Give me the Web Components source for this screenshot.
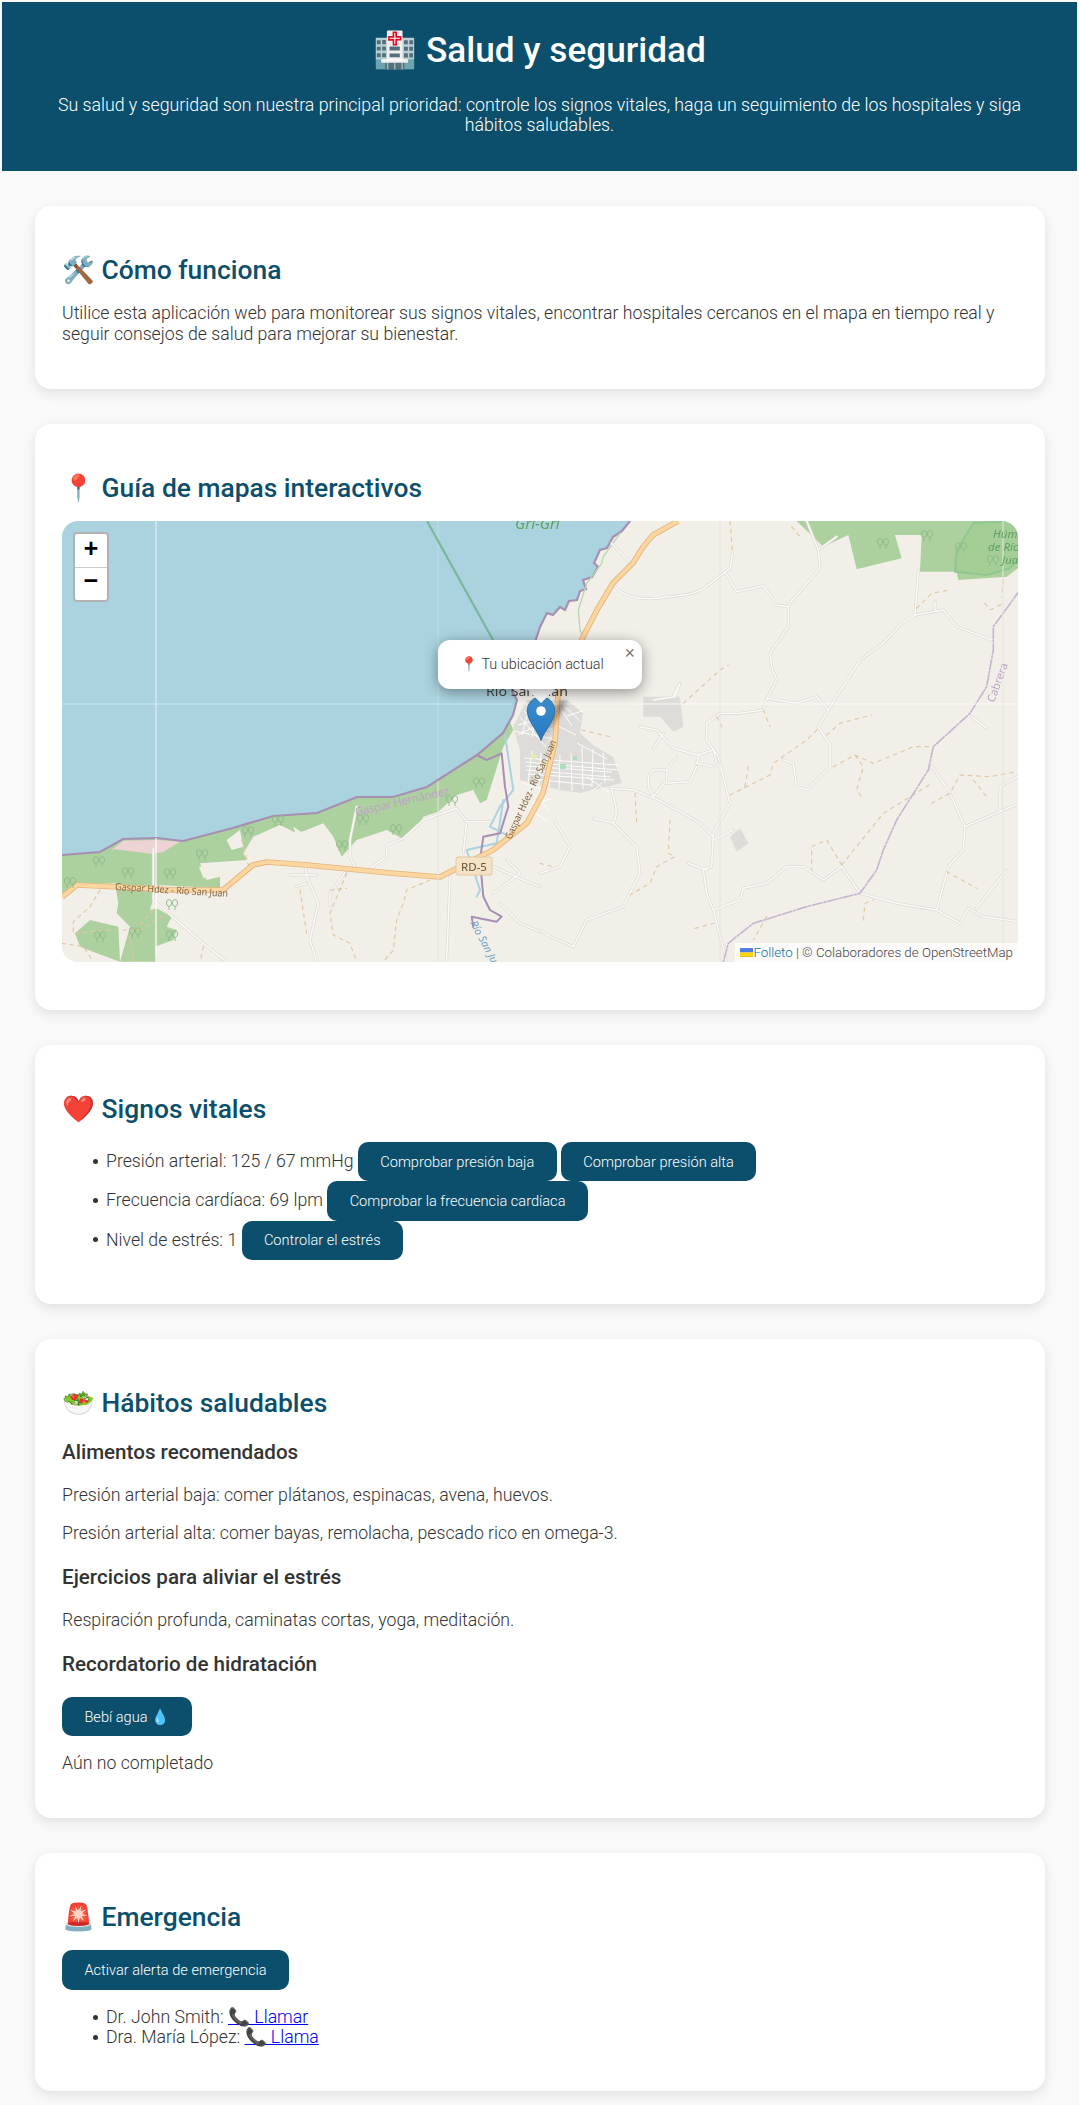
<!DOCTYPE html>
<html lang="es">
<head>
<meta charset="utf-8">
<title>Salud y seguridad</title>
<style>
  html, body { margin: 0; padding: 0; }
  body {
    margin: 2px 2px 0;
    background: #f9f9f9;
    color: #333;
    font-family: Roboto, "Noto Sans", sans-serif;
    font-weight: 300;
    font-size: 17.7px;
  }
  main { display: block; padding: 35px 32px 12px 33px; }
  p { margin: 0 0 17px; line-height: 21px; }
  a { color: #0000ee; }
</style>
</head>
<body>
<site-header>
  <span slot="title">🏥 Salud y seguridad</span>
  Su salud y seguridad son nuestra principal prioridad: controle los signos vitales, haga un seguimiento de los hospitales y siga hábitos saludables.
</site-header>

<main>
  <info-card heading="🛠️ Cómo funciona">
    <p>Utilice esta aplicación web para monitorear sus signos vitales, encontrar hospitales cercanos en el mapa en tiempo real y seguir consejos de salud para mejorar su bienestar.</p>
  </info-card>

  <info-card heading="📍 Guía de mapas interactivos">
    <map-view></map-view>
  </info-card>

  <info-card heading="❤️ Signos vitales">
    <vital-list>
      <vital-item>Presión arterial: 125 / 67 mmHg <action-button>Comprobar presión baja</action-button> <action-button>Comprobar presión alta</action-button></vital-item>
      <vital-item>Frecuencia cardíaca: 69 lpm <action-button>Comprobar la frecuencia cardíaca</action-button></vital-item>
      <vital-item>Nivel de estrés: 1 <action-button>Controlar el estrés</action-button></vital-item>
    </vital-list>
  </info-card>

  <info-card heading="🥗 Hábitos saludables">
    <sub-heading>Alimentos recomendados</sub-heading>
    <text-line>Presión arterial baja: comer plátanos, espinacas, avena, huevos.</text-line>
    <text-line>Presión arterial alta: comer bayas, remolacha, pescado rico en omega-3.</text-line>
    <sub-heading>Ejercicios para aliviar el estrés</sub-heading>
    <text-line>Respiración profunda, caminatas cortas, yoga, meditación.</text-line>
    <sub-heading>Recordatorio de hidratación</sub-heading>
    <action-button>Bebí agua 💧</action-button>
    <text-line class="after-button">Aún no completado</text-line>
  </info-card>

  <info-card heading="🚨 Emergencia">
    <action-button>Activar alerta de emergencia</action-button>
    <vital-list class="after-button">
      <vital-item>Dr. John Smith: <a href="#">📞 Llamar</a></vital-item>
      <vital-item>Dra. María López: <a href="#">📞 Llama</a></vital-item>
    </vital-list>
  </info-card>
</main>

<script>
  class SiteHeader extends HTMLElement {
    constructor() {
      super();
      this.attachShadow({ mode: "open" });
      this.shadowRoot.innerHTML = `
        <style>
          :host { display: block; height: 169px; background: #0b4f6c; color: #fff; text-align: center; padding: 28px 40px 0; box-sizing: border-box; }
          h1 { margin: 0 0 24px; font-size: 35.2px; line-height: 41px; font-weight: 500; }
          .sub { font-size: 17.74px; line-height: 20px; font-weight: 300; }
        </style>
        <h1><slot name="title"></slot></h1>
        <div class="sub"><slot></slot></div>`;
    }
  }

  class InfoCard extends HTMLElement {
    constructor() {
      super();
      this.attachShadow({ mode: "open" });
      this.shadowRoot.innerHTML = `
        <style>
          :host { display: block; background: #fff; border-radius: 16px; padding: 49px 27px 27px; margin-bottom: 35px; box-shadow: 0 4px 12px rgba(0,0,0,.1); }
          :host(:last-child) { margin-bottom: 0; }
          h2 { margin: 0 0 17px; font-size: 26.4px; line-height: 31px; font-weight: 500; color: #0b4f6c; }
        </style>
        <h2></h2>
        <slot></slot>`;
      this.shadowRoot.querySelector("h2").textContent = this.getAttribute("heading");
    }
  }

  class ActionButton extends HTMLElement {
    constructor() {
      super();
      this.attachShadow({ mode: "open" });
      this.shadowRoot.innerHTML = `
        <style>
          :host { display: contents; }
          button { height: 39.33px; padding: 0 22.4px; border: 0; border-radius: 10px; background: #0b4f6c; color: #fff; font: 300 14.6px Roboto, sans-serif; cursor: pointer; }
        </style>
        <button><slot></slot></button>`;
    }
  }

  class VitalList extends HTMLElement {
    constructor() {
      super();
      this.attachShadow({ mode: "open" });
      this.shadowRoot.innerHTML = `
        <style>
          :host { display: block; padding-left: 44px; margin-bottom: 17px; }
          :host(.after-button) { margin-top: 17px; }
        </style>
        <slot></slot>`;
    }
  }

  class VitalItem extends HTMLElement {
    constructor() {
      super();
      this.attachShadow({ mode: "open" });
      // no white space before the slot, it would push the text off the bullet
      this.shadowRoot.innerHTML = `<style>
          :host { display: block; }
          :host::before { content: ""; display: inline-block; width: 5px; height: 5px; margin: 0 8.5px 0 -13.5px; border-radius: 50%; background: #333; vertical-align: 3px; }
        </style><slot></slot>`;
    }
  }

  class SubHeading extends HTMLElement {
    constructor() {
      super();
      this.attachShadow({ mode: "open" });
      this.shadowRoot.innerHTML = `
        <style>:host { display: block; font-size: 20.6px; line-height: 24px; font-weight: 500; margin: 21.5px 0 20.5px; }</style>
        <slot></slot>`;
    }
  }

  class TextLine extends HTMLElement {
    constructor() {
      super();
      this.attachShadow({ mode: "open" });
      this.shadowRoot.innerHTML = `
        <style>
          :host { display: block; line-height: 21px; margin-bottom: 17px; }
          :host(.after-button) { margin-top: 17px; }
        </style>
        <slot></slot>`;
    }
  }

  const minorLeft = "M340 1045V1200L420 1270 490 1330 560 1385M950 920L930 1020 930 1070 950 1110M795 1095L800 1130 835 1210 810 1320 830 1385M750 1125L830 1125M770 1160L800 1150M1250 925L1150 960 1090 1015 1040 1035 1040 1070 990 1105M1250 925L1280 965 1360 965M1280 965L1270 1060M920 1110L870 1180 870 1215M1230 1130L1220 1385M1360 1100L1450 1140 1500 1160M1360 1180L1440 1120 1400 1080M1380 1210L1440 1270 1500 1295";
  const minorRight = "M215 130L270 190M220 250C240 290 300 300 350 295L430 285C490 280 520 240 570 205L578 160M555 215L590 275 670 258 695 290 705 315 745 320 745 380 690 460 695 500 710 540 680 600 670 630 600 640 540 640 500 670 500 720 535 770 545 810 570 910 520 1000 515 1100 490 1110 500 1180 520 1230 560 1385M745 315L840 205 835 150 890 110M835 150L800 63M880 605L960 480 1030 430 1085 370 1125 345 1210 330 1250 380 1355 420M1125 345L1135 210M1185 330V305M680 595L770 610 830 590 865 630 835 680 870 735 870 800 800 870 770 860 760 790 730 780M865 630L880 605M210 865L280 870 345 895 420 935 480 970 520 1010M520 1020L580 990M300 680L350 690 400 745 470 765 520 750 530 790 545 810M480 760L470 790 520 800M340 745L370 700M325 830L340 810 380 810 380 840 340 890 325 860ZM380 850L450 845 470 800M380 810L410 770M215 870C220 900 240 930 220 970L160 955M220 970L290 1040 300 1120 250 1220 140 1260 100 1340 30 1310 0 1290M45 965L90 1040 60 1100 0 1120M445 1090L500 1110M520 1230L600 1200 610 1165 680 1150 740 1100 790 1100 850 1140 905 1100 960 1180 1070 1210 1190 1230 1260 1270 1285 1225 1330 1250 1440 1265M1190 1230L1225 1100 1270 1050 1275 980 1225 870 1175 800M1275 980L1380 935 1440 910M1380 935V860L1440 825M1310 1225L1400 1110M1295 650L1340 685M400 590L420 550 405 590 340 600";
  const mainRoad = "M616 0L591 14 581 26 571 42 551 62 535 89 521 116 505 150 496 174 493 222 481 272 465 302 431 329 378 356 328 352 245 344 205 341 191 344 161 369 111 369 58 366 15 364 0 376";
  const coast = "M0 334L38 331 61 318 95 317 121 320 171 307 211 295 255 292 295 276 331 276 365 266 415 234 441 212 451 194 455 179 450 170 470 130 478 106 481 100 485 92 491 94 498 86 503 89 507 80 515 79 518 70 524 68 521 59 530 56 536 46 532 42 538 29 545 27 551 16 560 10 568 0";

  const mapTemplate = document.createElement("template");
  mapTemplate.innerHTML = `
  <style>
    :host { display: block; position: relative; height: 441px; border-radius: 16px; overflow: hidden; margin-bottom: 21px; background: #f2efe9; }
    svg.tiles { display: block; width: 100%; height: 100%; filter: blur(.45px); }
    svg text { font-family: "Noto Sans", sans-serif; font-weight: 400; }
    .zoom { position: absolute; left: 11px; top: 11px; width: 32px; border: 2px solid rgba(0,0,0,.3); border-radius: 4px; background: #fff; }
    .zoom b { display: block; height: 33px; text-align: center; font: bold 25px/33px "Liberation Mono", monospace; color: #000; }
    .zoom b + b { border-top: 1px solid #ccc; height: 32px; line-height: 30px; }
    .popup { position: absolute; left: 376px; top: 119px; width: 204px; height: 49px; box-sizing: border-box; border-radius: 12px; background: #fff; box-shadow: 0 3px 14px rgba(0,0,0,.4); text-align: center; font-size: 14.4px; line-height: 17px; padding: 16px 16px 0 0; color: #333; }
    .tip { position: absolute; left: 459px; top: 168px; width: 40px; height: 14px; overflow: hidden; }
    .tip i { display: block; width: 20px; height: 20px; margin: -10px auto 0; background: #fff; transform: rotate(45deg); }
    .close { position: absolute; right: 7px; top: 4px; font: 400 18px/18px "Liberation Sans", sans-serif; color: #777; }
    .marker { position: absolute; left: 462px; top: 154px; }
    .attr { position: absolute; right: 0; bottom: 0; height: 19px; padding: 0 5px; background: rgba(255,255,255,.8); font-size: 13.3px; line-height: 19px; color: #444; display: flex; align-items: center; white-space: pre; }
    .attr a { color: #0078a8; text-decoration: none; }
    .attr svg { display: block; }
  </style>
  <svg class="tiles" viewBox="0 0 956 441" preserveAspectRatio="none">
    <defs>
      <g id="tree" fill="none" stroke="#8cb98a" stroke-width=".9">
        <ellipse cx="-3" cy="-3" rx="2.6" ry="3.4"/><ellipse cx="3" cy="-3" rx="2.6" ry="3.4"/><path d="M-3 0v4M3 0v4"/>
      </g>
    </defs>
    <rect width="956" height="441" fill="#f2efe9"/>

    <!-- left half, same numbers as the crop of that side -->
    <g transform="translate(-22,-21) scale(.33333)" fill="none" stroke-linejoin="round" stroke-linecap="round">
      <path fill="#add19e" d="M60 1195L110 1155 225 1150 235 1210 230 1240 270 1280 240 1385 350 1385 345 1340 400 1320 410 1290 380 1280 395 1250 350 1225 330 1230 350 1155 540 1165 540 1130 500 1140 480 1090 620 1080 610 1060 640 1010 720 975 770 1000 800 990 850 970 880 1010 905 1070 950 1020 1040 990 1085 1015 1140 970 1150 950 1195 935 1250 885 1300 870 1320 910 1340 900 1390 740 1420 690 1400 640 1310 760 1160 860 1060 890 950 890 830 940 700 948 580 985 430 1022 350 1015 250 1018 180 1055 60 1065Z"/>
      <path fill="#add19e" d="M105 1300L150 1260 235 1280 240 1385 170 1360 120 1340Z"/>
      <path fill="#f2efe9" d="M560 1020L600 990 610 1040 575 1050ZM477 1100L540 1095 520 1125 490 1135ZM760 980L790 1000 770 1010Z"/>
      <path fill="#edd3d3" d="M215 1050L250 1022 350 1020 420 1025 370 1055 340 1062 225 1048Z"/>
      <path stroke="#dcd9d3" stroke-width="8.5" d="${minorLeft}"/>
      <path stroke="#fbfaf8" stroke-width="4.5" d="${minorLeft}"/>
      <path stroke="#e0c6a4" stroke-width="3.5" stroke-dasharray="11 13" d="M180 1170L150 1220 100 1265 100 1300M65 1330L130 1340 160 1385M105 1300L200 1290 300 1290 380 1240M340 1230L270 1310 280 1385M780 1170L800 1300M870 1170L920 1165M920 1120L870 1240 880 1305 930 1330 950 1385M1170 1140L1100 1170 1090 1210 1070 1260 1060 1350 1030 1385M490 1340L480 1385M605 1020L625 1095"/>
      <path stroke="#aad3df" stroke-width="6" d="M1395 705L1420 870 1380 920 1350 980 1410 1010M1390 900L1370 1030 1280 1050 1320 1170 1310 1190"/>
      <path stroke="#a78fb3" stroke-width="6" d="M1310 765L1340 780 1385 760 1395 860 1405 920 1380 1000 1330 1010 1320 1080 1330 1190 1350 1230 1385 1250 1370 1265 1295 1250 1300 1280"/>
    </g>

    <!-- water sits over the land, then the coast line -->
    <path fill="#aad3df" d="${coast}L568 0H0Z"/>
    <path d="M94 0V317" stroke="#e4f2f6" stroke-width="1"/>
    <path d="M376 0V260" stroke="#c4dde4" stroke-width="1"/>
    <path d="M0 183H450" stroke="#c9ebf3" stroke-width="1"/>
    <path d="M365 0L431 119" stroke="#79b79c" stroke-width="2.2" fill="none"/>
    <path fill="none" stroke="#a78fb3" stroke-width="2.2" d="${coast}"/>

    <!-- right half, same numbers as the crop of that side -->
    <g transform="translate(478,-21) scale(.33333)" fill="none" stroke-linejoin="round" stroke-linecap="round">
      <path fill="#add19e" d="M770 63L850 140 925 105 950 208 1085 175 1065 105 1145 105 1140 215 1250 215 1255 240 1400 230 1440 200V63Z"/>
      <path fill="#a3cf97" stroke="#8fc78e" stroke-width="6" d="M1300 70L1250 150 1245 215 1340 225 1410 205 1440 170V60Z"/>
      <path stroke="#b5d9ad" stroke-width="4" d="M240 100L190 170 185 190 140 250 115 330 120 390 130 410"/>
      <path fill="#dddcd9" d="M310 590L420 590 430 680 400 695 360 650 310 650ZM570 1010L600 985 625 1030 590 1055Z"/>
      <path stroke="#dcd9d3" stroke-width="8.5" d="${minorRight}"/>
      <path stroke="#fbfaf8" stroke-width="4.5" d="${minorRight}"/>
      <path stroke="#e0c6a4" stroke-width="3.5" stroke-dasharray="11 14" d="M570 885L690 825 700 790 800 720 840 680M860 705L900 670 995 645M430 610L540 510 565 495M625 800L615 860M880 800L945 765 970 800 950 870 965 890M945 765L1000 790 1120 740 1180 740M530 650L545 680M670 630L690 680M285 880L290 970M390 960L385 1060 405 1070 350 1100 330 1150 270 1185M570 63L578 160M1175 910L1230 880 1260 825 1350 830 1430 815M1300 840L1340 890M905 1095L1030 940 1095 900 1175 850M905 1095L860 1020 815 1040 815 1110M1130 325L1175 280 1230 270M1390 240L1385 290M1335 310L1350 330 1390 310M970 1260L975 1210 1000 1200M1220 1115L1310 1165M465 1285L520 1270M680 1250L640 1320M125 690L210 710M0 1090L40 1100M755 80L780 110"/>
      <path stroke="#c6b6cf" stroke-width="5" stroke-dasharray="30 6 5 6" d="M1440 270L1360 380 1360 450 1340 560 1290 640 1180 740 1165 810 1070 960 1030 1050 1010 1110 960 1180 800 1220 640 1270 565 1330 550 1385"/>
    </g>

    <!-- town -->
    <path fill="#dddcd9" d="M505 179L521 192 518 212 531 224 551 236 560 262 518 272 498 269 458 259 458 229 451 206 465 179Z"/>
    <g fill="none" stroke="#fff" stroke-width=".9">
      <path d="M462 190L486 214M456 204L490 195M468 184L460 214M476 182L470 216M484 186L478 218M452 210L492 218M458 196L484 226M500 183L518 200M505 195L520 190M510 205L500 190M496 205L514 214M456 214L484 200M466 208L490 208M472 178L494 192M488 180L482 200"/>
      <path d="M462 237L556 244M464 245L550 251M466 253L552 259M470 230L466 262M479 232L477 264M488 230L487 266M498 234L497 268M509 232L510 270M520 226L521 268M531 228L530 266M541 232L543 262M460 262L480 268M463 241L556 249M464 249L548 256M515 222L545 238M470 258L530 264"/>
      <path d="M525 256L548 272M530 270L540 262M468 270L488 290M470 282L490 278M472 292L486 300"/>
    </g>
    <path d="M470 232l5 3-3 4-4-3zM482 240l5 2-2 5-5-2z" fill="#eaeab0"/>
    <path d="M498 243h6v5h-6zM511 235h4v4h-4z" fill="#a9dfc0"/>

    <!-- main road -->
    <path fill="none" stroke="#e6b47a" stroke-width="5.6" stroke-linejoin="round" d="${mainRoad}"/>
    <path fill="none" stroke="#fcd6a0" stroke-width="3.8" stroke-linejoin="round" d="${mainRoad}"/>

    <!-- tile seams over land -->
    <path d="M94 317V441" stroke="#fff" stroke-width="1.2"/>
    <path d="M376 260V441M658 0V441M941 0V441" stroke="#e6e4df" stroke-width="1"/>
    <path d="M455 183H956" stroke="#fbfaf8" stroke-width="1"/>

    <use href="#tree" x="37" y="342"/><use href="#tree" x="66" y="353"/><use href="#tree" x="108" y="354"/><use href="#tree" x="140" y="335"/><use href="#tree" x="186" y="312"/><use href="#tree" x="216" y="301"/><use href="#tree" x="301" y="300"/><use href="#tree" x="334" y="310"/><use href="#tree" x="280" y="326"/><use href="#tree" x="390" y="281"/><use href="#tree" x="417" y="263"/><use href="#tree" x="8" y="363"/><use href="#tree" x="38" y="417"/><use href="#tree" x="73" y="413"/><use href="#tree" x="110" y="385"/><use href="#tree" x="110" y="416"/><use href="#tree" x="821" y="24"/><use href="#tree" x="865" y="16"/><use href="#tree" x="899" y="28"/><use href="#tree" x="931" y="41"/>

    <!-- labels -->
    <text x="453" y="8" font-size="15" font-style="italic" fill="#5aa35a">Gri-Gri</text>
    <text x="424" y="175" font-size="13" fill="#444" textLength="82" lengthAdjust="spacingAndGlyphs">Río San Juan</text>
    <text transform="translate(294,295) rotate(-13)" font-size="11.5" fill="#bda3c4" textLength="96">Gaspar Hernández</text>
    <text transform="translate(53,369) rotate(3.5)" font-size="10" fill="#5c4020" stroke="#f6dfbd" stroke-width=".2" textLength="113" lengthAdjust="spacingAndGlyphs">Gaspar Hdez - Río San Juan</text>
    <text transform="translate(449,319) rotate(-65)" font-size="10" fill="#5c4020" stroke="#f6dfbd" stroke-width=".2" textLength="108" lengthAdjust="spacingAndGlyphs">Gaspar Hdez - Río San Juan</text>
    <rect x="394" y="336" width="36" height="18" rx="2" fill="#f5e3c8" stroke="#e2c9a0"/>
    <text x="412" y="349.5" font-size="11.5" fill="#6a5233" text-anchor="middle">RD-5</text>
    <text transform="translate(408,402) rotate(62)" font-size="10.5" font-style="italic" fill="#6a9fc2">Río San Juan</text>
    <text transform="translate(932,182) rotate(-70)" font-size="11" fill="#bda3c4">Cabrera</text>
    <g font-size="11.5" font-style="italic" fill="#5f9e63">
      <text x="931" y="17">Húmedales</text><text x="926" y="30">de Río San</text><text x="940" y="43">Juan</text>
    </g>
  </svg>

  <div class="zoom"><b>+</b><b>−</b></div>

  <svg class="marker" width="60" height="70" viewBox="0 0 60 70">
    <defs>
      <linearGradient id="pin" x1="0" y1="0" x2="0" y2="1"><stop offset="0" stop-color="#3d8fd0"/><stop offset="1" stop-color="#2778bd"/></linearGradient>
      <filter id="soft" x="-50%" y="-50%" width="200%" height="200%"><feGaussianBlur stdDeviation="2.4"/></filter>
    </defs>
    <path d="M18 66L42 30C44 26 36 24 33 28Z" fill="#000" opacity=".38" filter="url(#soft)"/>
    <path d="M17 65.5C14.5 57 3.3 46 3.3 36 3.3 28 9.3 22 17 22S30.7 28 30.7 36C30.7 46 19.5 57 17 65.5Z" fill="url(#pin)" stroke="#2a6ea6" stroke-width="1"/>
    <circle cx="17" cy="36" r="4.8" fill="#fff"/>
  </svg>
  <div class="tip"><i></i></div>
  <div class="popup">📍 Tu ubicación actual<span class="close">×</span></div>

  <div class="attr"><svg width="13.3" height="9" viewBox="0 0 12 8"><path fill="#4c7be1" d="M0 0h12v4H0z"/><path fill="#ffd500" d="M0 4h12v3H0z"/><path fill="#e0bc00" d="M0 7h12v1H0z"/></svg><a href="#">Folleto</a> | © Colaboradores de OpenStreetMap</div>`;

  class MapView extends HTMLElement {
    constructor() {
      super();
      this.attachShadow({ mode: "open" });
      this.shadowRoot.appendChild(mapTemplate.content.cloneNode(true));
    }
  }

  customElements.define("site-header", SiteHeader);
  customElements.define("info-card", InfoCard);
  customElements.define("action-button", ActionButton);
  customElements.define("vital-list", VitalList);
  customElements.define("vital-item", VitalItem);
  customElements.define("sub-heading", SubHeading);
  customElements.define("text-line", TextLine);
  customElements.define("map-view", MapView);
</script>
</body>
</html>
